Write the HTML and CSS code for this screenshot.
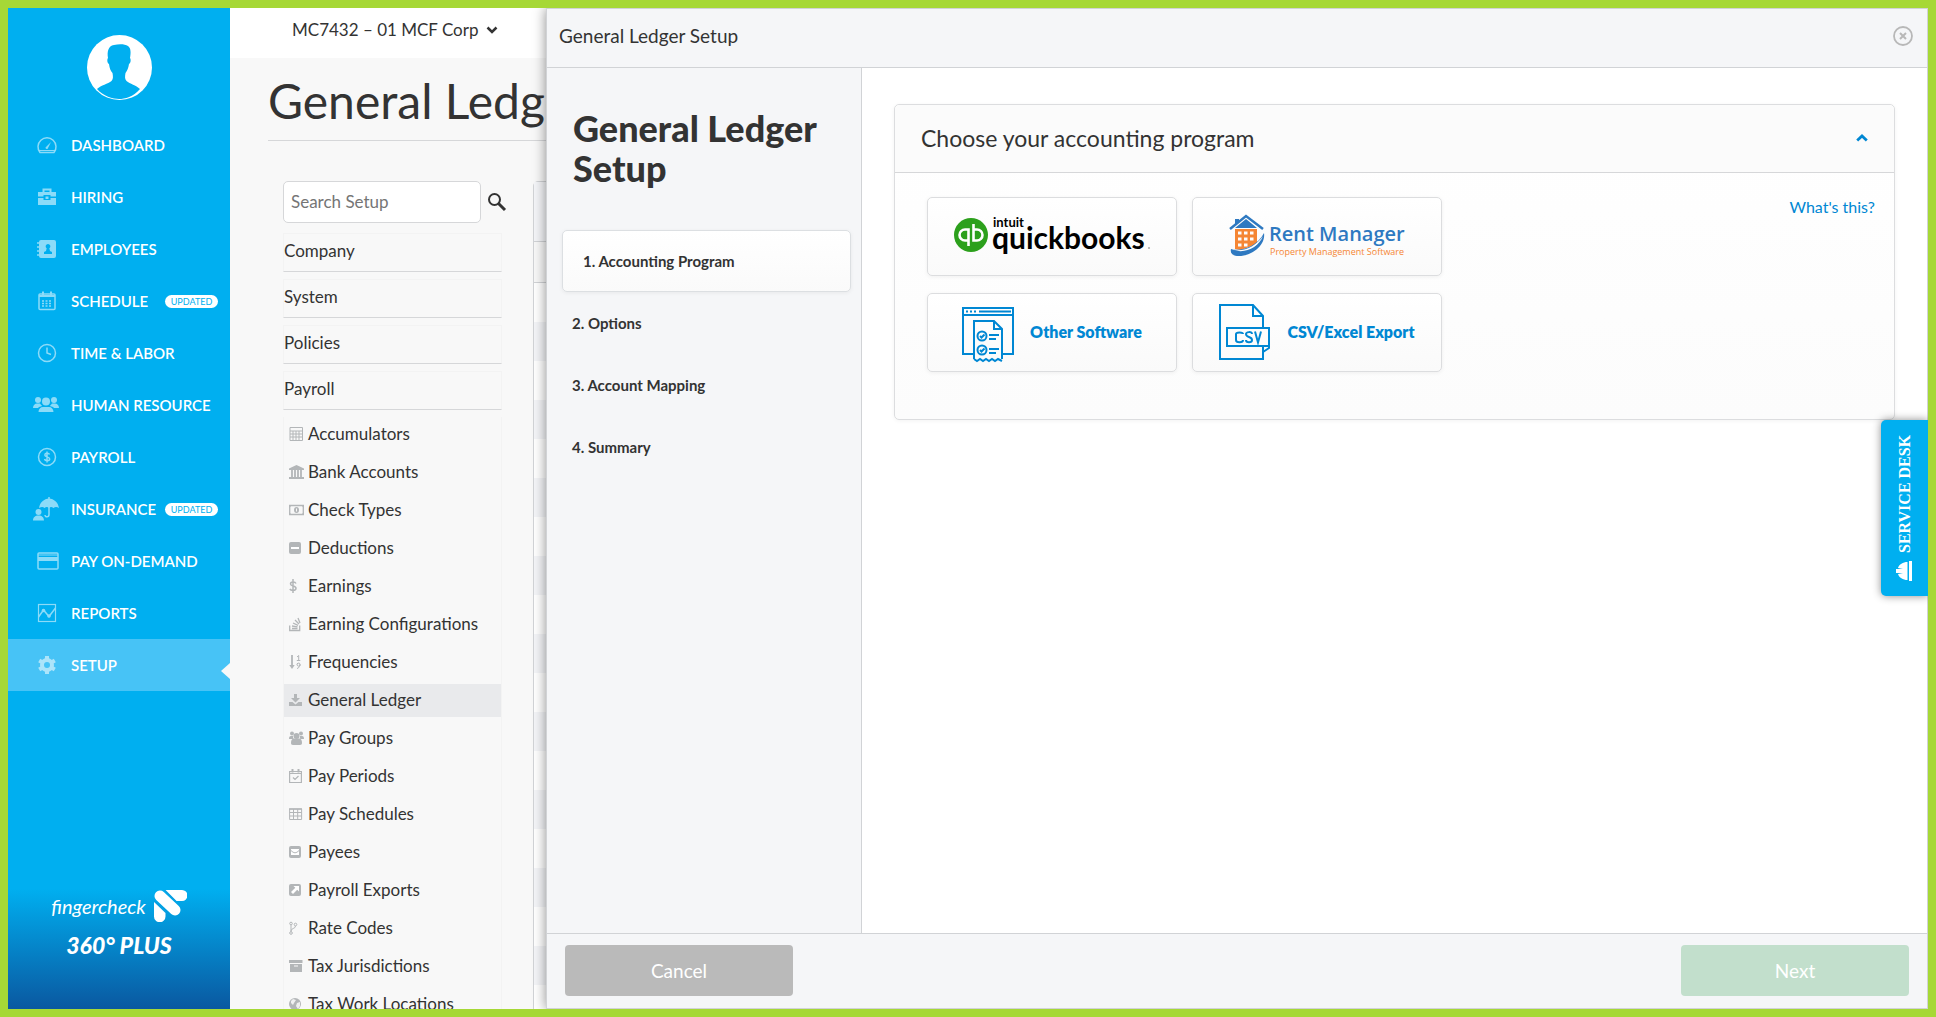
FILE: index.html
```html
<!DOCTYPE html>
<html lang="en">
<head>
  <meta charset="UTF-8">
  <meta name="viewport" content="width=device-width, initial-scale=1.0">
  <title>General Ledger Setup</title>
  <link rel="stylesheet" href="styles.css">
</head>
<body>
  <div class="app">
    <aside class="sidebar">
      <svg class="avatar" viewBox="0 0 65 65">
        <circle cx="32.5" cy="32.5" r="32.5" fill="#fff"/>
        <path d="M10 54c4-4 11-5 14.500-8 2-2 1.500-5 1-8-2-2-3-5-3.500-9-2-1-2-5-1-6-1-6 0-12 6-13 5-1 11-1 14 1 3 2 3 7 2 12 1 1 1 5-1 6-.5 4-2 7-3.500 9-.5 3-1 6 1 8C43 49 49 50 53 54 46 62 38 64 32 64S16 61 10 54z" fill="#00aff0"/>
      </svg>
      <nav class="menu">
        <a class="menu-item" href="#">
          <svg class="menu-icon" viewBox="0 0 20 20"><path d="M3 17.500a9 9 0 1 1 14 0z" fill="none" stroke="#fff" stroke-width="1.500"/><path d="M8.500 12.500L14 7l-3.500 7a1.500 1.500 0 0 1-2-1.500z" fill="#fff"/><path d="M2 15.500h16" stroke="#fff"/></svg>
          DASHBOARD
        </a>
        <a class="menu-item" href="#">
          <svg class="menu-icon" viewBox="0 0 20 20"><path d="M6.500 5V2.500h7V5" fill="none" stroke="#fff" stroke-width="2"/><path d="M1 5h18v4.500h-5.500V8h-7v1.500H1zM1 11h5.500v2h7v-2H19v7H1z" fill="#fff"/><path d="M8.500 9.500h3v2.500h-3z" fill="#fff"/></svg>
          HIRING
        </a>
        <a class="menu-item" href="#">
          <svg class="menu-icon" viewBox="0 0 20 20"><path fill-rule="evenodd" d="M4 1h13a2 2 0 0 1 2 2v14a2 2 0 0 1-2 2H4a2 2 0 0 1-2-2V3a2 2 0 0 1 2-2zm7 4a2.300 2.300 0 0 0-1.300 4.200L9 12l-2 1v2h8v-2l-2-1-.7-2.800A2.300 2.300 0 0 0 11 5z" fill="#fff"/><path d="M0 4h2M0 8h2M0 12h2M0 16h2" stroke="#fff" stroke-width="1.500"/></svg>
          EMPLOYEES
        </a>
        <a class="menu-item" href="#">
          <svg class="menu-icon" viewBox="0 0 20 20"><rect x="2" y="3" width="16" height="15.500" rx="1" fill="none" stroke="#fff" stroke-width="1.500"/><path d="M2 5h16M6 .5v4M14 .5v4" stroke="#fff" stroke-width="2"/><path d="M5 10h10M5 12.500h10M5 15h10" stroke="#fff" stroke-width="1.500" stroke-dasharray="2 1.500"/></svg>
          SCHEDULE <span class="badge">UPDATED</span>
        </a>
        <a class="menu-item" href="#">
          <svg class="menu-icon" viewBox="0 0 20 20"><circle cx="10" cy="10" r="8.500" fill="none" stroke="#fff" stroke-width="1.500"/><path d="M10 4.500V10l4 1.500" fill="none" stroke="#fff" stroke-width="1.500"/></svg>
          TIME &amp; LABOR
        </a>
        <a class="menu-item" href="#">
          <svg class="menu-icon wide" viewBox="0 0 26 20"><g fill="#fff"><circle cx="5" cy="5" r="3"/><circle cx="21" cy="5" r="3"/><circle cx="13" cy="6.500" r="4"/><path d="M0 13c0-3 2-4.500 4-4.500h3c1 1.500 2 2 2 2.500-2 .5-3 1-4 2zM26 13c0-3-2-4.500-4-4.500h-3c-1 1.500-2 2-2 2.500 2 .5 3 1 4 2zM5.500 17c0-3 2-5 4.500-5h6c2.500 0 4.500 2 4.500 5z"/></g></svg>
          HUMAN RESOURCE
        </a>
        <a class="menu-item" href="#">
          <svg class="menu-icon" viewBox="0 0 20 20"><circle cx="10" cy="10" r="8.500" fill="none" stroke="#fff" stroke-width="1.500"/><path d="M12.500 7.500C12 6 8 5.700 7.800 8c0 2.300 4.900 1.500 4.900 4 0 2.300-4.700 2.300-5.200 0M10 4.500v11" fill="none" stroke="#fff" stroke-width="1.500"/></svg>
          PAYROLL
        </a>
        <a class="menu-item" href="#">
          <svg class="menu-icon wide tall" viewBox="0 0 26 24"><g fill="#fff"><circle cx="5.500" cy="15" r="3"/><path d="M0 23.500c0-3 2-5 5.500-5s5.500 2 5.500 5zM6 11C7 5 11 2 16 1.500c5 .5 9 3.500 10 9.500-2-1.500-4-1.500-5.500 0-2-1.500-3-1.500-4.500 0-1.500-1.500-3-1.500-4.500 0-1.500-1.500-3-1.500-5.500 0z"/></g><path d="M16 0v17.500c0 3-4 3-4 .5" fill="none" stroke="#fff" stroke-width="1.500"/></svg>
          INSURANCE <span class="badge">UPDATED</span>
        </a>
        <a class="menu-item" href="#">
          <svg class="menu-icon card-icon" viewBox="0 0 22 20"><rect x="1" y="2" width="20" height="16" rx="1" fill="none" stroke="#fff" stroke-width="1.500"/><path d="M1 4h20" stroke="#fff"/><path d="M1 8h20" stroke="#fff" stroke-width="4"/></svg>
          PAY ON-DEMAND
        </a>
        <a class="menu-item" href="#">
          <svg class="menu-icon" viewBox="0 0 20 20"><rect x="1.500" y="1.500" width="17" height="17" fill="none" stroke="#fff" stroke-width="1.200"/><path d="M1.500 14l5-7 5.500 6.500L18.500 5" fill="none" stroke="#fff" stroke-width="1.500"/><circle cx="6.500" cy="7.500" r="1.800" fill="#fff"/><circle cx="12" cy="13" r="1.800" fill="#fff"/></svg>
          REPORTS
        </a>
        <a class="menu-item active" href="#">
          <svg class="menu-icon" viewBox="0 0 20 20"><circle cx="10" cy="10" r="5" fill="none" stroke="#fff" stroke-width="4"/><path d="M10 1v4M10 15v4M2.200 5.500l3.500 2M14.300 12.500l3.500 2M2.200 14.500l3.500-2M14.300 7.500l3.500-2" stroke="#fff" stroke-width="4"/></svg>
          SETUP
        </a>
      </nav>
      <div class="brand">
        <div class="brand-row">
          <span class="brand-name">fingercheck</span>
          <svg class="brand-mark" viewBox="0 0 33 32"><g stroke="#fff" stroke-width="11" stroke-linecap="round"><path d="M6 6l15 14"/></g><path d="M10.500 0H28a5.500 5.500 0 0 1 0 11H22zM0 11l11.500 11v4.500a5.700 5.700 0 0 1-11.500 0z" fill="#fff"/><path d="M9.500 -1L22 11.500M-1 10l13 12.500" stroke="#0a9fe2" stroke-width="1.500"/></svg>
        </div>
        <div class="brand-plan">360° PLUS</div>
      </div>
    </aside>

    <main class="page">
      <div class="topbar">
        <button class="company" type="button">MC7432 – 01 MCF Corp
          <svg class="chevron" viewBox="0 0 12 8"><path d="M1.500 1.500L6 6l4.500-4.500" fill="none" stroke="currentColor" stroke-width="2.500"/></svg>
        </button>
      </div>
      <h1 class="page-title">General Ledger</h1>

      <div class="columns">
        <div class="setup-nav">
          <form class="search">
            <input type="text" placeholder="Search Setup" aria-label="Search Setup">
            <button type="button" aria-label="Search">
              <svg viewBox="0 0 20 20"><circle cx="7.500" cy="7.500" r="5.500" fill="none" stroke="#333" stroke-width="2"/><path d="M11.500 11.500L18 18" stroke="#333" stroke-width="3"/></svg>
            </button>
          </form>
          <a class="group" href="#">Company</a>
          <a class="group" href="#">System</a>
          <a class="group" href="#">Policies</a>
          <a class="group" href="#">Payroll</a>
          <ul class="items">
            <li><a href="#"><svg viewBox="0 0 16 16"><path d="M1 1.500h12.500v13H1zM1 5h12.500M1 8h12.500M1 11h12.500M4 5v9.500M7 5v9.500M10 5v9.500" fill="none" stroke="#b3b6b8"/></svg>Accumulators</a></li>
            <li><a href="#"><svg viewBox="0 0 16 16"><path d="M0 4.500L7.500 1 15 4.500V6H0zM0 13h15v2H0z" fill="#b3b6b8"/><path d="M3 6v7M6 6v7M9 6v7M12 6v7" stroke="#b3b6b8" stroke-width="1.800"/></svg>Bank Accounts</a></li>
            <li><a href="#"><svg viewBox="0 0 16 16"><path d="M.7 3.500h13.600v9H.7z" fill="none" stroke="#b3b6b8" stroke-width="1.300"/><path d="M0 3h3L0 6zM15 3v3l-3-3zM0 10l3 3H0zM15 10v3h-3z" fill="#b3b6b8"/><ellipse cx="7.500" cy="8" rx="2.500" ry="3" fill="#b3b6b8"/><path d="M7.500 6.500v3" stroke="#f8f8f8"/></svg>Check Types</a></li>
            <li><a href="#"><svg viewBox="0 0 16 16"><rect y="2" width="12" height="12" rx="2" fill="#b3b6b8"/><path d="M2 8h8" stroke="#fff" stroke-width="2"/></svg>Deductions</a></li>
            <li><a href="#"><svg viewBox="0 0 16 16"><path d="M7 5.500C6 3.500 1.500 3.500 1.500 6S7 7.500 7 10.200 2 13 .8 11M4 1v14" fill="none" stroke="#b3b6b8" stroke-width="1.500"/></svg>Earnings</a></li>
            <li><a href="#"><svg viewBox="0 0 16 16"><path d="M.7 9.500v5h10v-5M3 12.500h5.500M3 10l5.500.8M4 7l5 2.300M6 4l4 4M9 2l2 5" fill="none" stroke="#b3b6b8" stroke-width="1.300"/></svg>Earning Configurations</a></li>
            <li><a href="#"><svg viewBox="0 0 16 16"><path d="M3 1v12" stroke="#b3b6b8" stroke-width="1.800"/><path d="M.3 11h5.400L3 15z" fill="#b3b6b8"/><path d="M8 3l1.700-1.500V6.500M7.800 6.500h3.500M11 10.500a1.500 1.500 0 1 0-.5 1.200c.5-3 .7 2.500-2.500 2.800M11 10v2" fill="none" stroke="#b3b6b8"/></svg>Frequencies</a></li>
            <li class="current"><a href="#"><svg viewBox="0 0 16 16"><path d="M0 10h3.500L6.500 12.500 9.500 10H13v4H0z" fill="#b3b6b8"/><path d="M5 2h3v4h3L6.500 10.500 2 6h3z" fill="#b3b6b8"/></svg>General Ledger</a></li>
            <li><a href="#"><svg viewBox="0 0 16 16"><g fill="#b3b6b8"><circle cx="3" cy="3.500" r="2"/><circle cx="12" cy="3.500" r="2"/><circle cx="7.500" cy="6" r="3"/><path d="M0 9c0-2 .5-3 2-3h2c0 2 0 2.500 1 3zM15 9c0-2-.5-3-2-3h-2c0 2 0 2.500-1 3zM2 13c0-3 1-4.500 3-4.500h5c2 0 3 1.500 3 4.500 0 1-.5 2-2 2H4c-1.500 0-2-1-2-2z"/></g></svg>Pay Groups</a></li>
            <li><a href="#"><svg viewBox="0 0 16 16"><path d="M.6 3.500h11.800v11H.6zM.6 5.500h11.800M4 9.500l2 2 3.500-3.500" fill="none" stroke="#b3b6b8" stroke-width="1.200"/><path d="M3.500 1v3.500M9.500 1v3.500" stroke="#b3b6b8" stroke-width="2"/></svg>Pay Periods</a></li>
            <li><a href="#"><svg viewBox="0 0 16 16"><path d="M.6 3h12v10.500H.6zM.6 6.500h12M.6 10h12M4.500 3v10.500M8.700 3v10.500" fill="none" stroke="#b3b6b8"/><path d="M0 3h13" stroke="#b3b6b8" stroke-width="1.500"/></svg>Pay Schedules</a></li>
            <li><a href="#"><svg viewBox="0 0 16 16"><rect y="2" width="12" height="12" rx="2" fill="#b3b6b8"/><path d="M2 5h8v6H2z" fill="#fff"/><path d="M2 6.500c3 3 5 3 8 0" fill="none" stroke="#b3b6b8"/></svg>Payees</a></li>
            <li><a href="#"><svg viewBox="0 0 16 16"><rect y="2" width="12" height="12" rx="2" fill="#b3b6b8"/><path d="M4.500 4H10v5.500L8.200 7.700 4 12l-2-2 4.300-4.200z" fill="#fff"/></svg>Payroll Exports</a></li>
            <li><a href="#"><svg viewBox="0 0 16 16"><g fill="none" stroke="#b3b6b8"><circle cx="2" cy="3.500" r="1.300"/><circle cx="6.500" cy="4.500" r="1.300"/><circle cx="2" cy="13" r="1.300"/><path d="M2 5v7M6.500 6c0 3-4.500 2-4.500 5"/></g></svg>Rate Codes</a></li>
            <li><a href="#"><svg viewBox="0 0 16 16"><path fill-rule="evenodd" d="M0 2h13.500v3H0zM1 6h12v8H1zm4 1.500v1h4v-1z" fill="#b3b6b8"/></svg>Tax Jurisdictions</a></li>
            <li><a href="#"><svg viewBox="0 0 16 16"><circle cx="6" cy="8" r="6" fill="#b3b6b8"/><path d="M2 5l2-2 3 1-2 3-1 2-2-2zM8 7l3-1v4l-2 3-2-3z" fill="#f0f0f0"/></svg>Tax Work Locations</a></li>
          </ul>
        </div>
        <div class="grid-panel">
          <div class="grid-head"></div>
          <div class="grid-filter"></div>
          <div class="grid-rows"></div>
        </div>
      </div>
    </main>

    <section class="modal">
      <header class="modal-header">
        <span>General Ledger Setup</span>
        <button class="close" type="button" aria-label="Close">
          <svg viewBox="0 0 20 20"><circle cx="10" cy="10" r="9" fill="none" stroke="#b8b8b8" stroke-width="1.800"/><path d="M7 7l6 6M13 7l-6 6" stroke="#b8b8b8" stroke-width="2"/></svg>
        </button>
      </header>
      <div class="modal-body">
        <div class="steps">
          <h2>General Ledger Setup</h2>
          <a class="step active" href="#">1. Accounting Program</a>
          <a class="step" href="#">2. Options</a>
          <a class="step" href="#">3. Account Mapping</a>
          <a class="step" href="#">4. Summary</a>
        </div>
        <div class="content">
          <div class="card">
            <div class="card-header">
              <h3>Choose your accounting program</h3>
              <svg class="chevron" viewBox="0 0 12 8"><path d="M1.200 6.500L6 2l4.800 4.500" fill="none" stroke="#0087d3" stroke-width="2.800"/></svg>
            </div>
            <div class="card-body">
              <div class="programs">
                <button class="program" type="button">
                  <svg class="logo" viewBox="0 0 198 44">
                    <circle cx="18" cy="21" r="17" fill="#2ca01c"/>
                    <g fill="none" stroke="#fff" stroke-width="2.600"><path d="M15.500 26.500H12a5.500 5.500 0 0 1 0-11h3.500V32M20.500 15.500H24a5.500 5.500 0 0 1 0 11h-3.500V10"/></g>
                    <text class="qb-small" x="40" y="13">intuit</text>
                    <text class="qb-name" x="39" y="35">quickbooks</text>
                    <circle cx="196" cy="34" r="1" fill="#aaa"/>
                  </svg>
                </button>
                <button class="program" type="button">
                  <svg class="logo rm" viewBox="0 0 176 44">
                    <path d="M1 15L17 2l17 13" fill="none" stroke="#2e79c1" stroke-width="2.500"/>
                    <path d="M6 11V5h4v3zM17 5l11 9H6z" fill="#2e79c1"/>
                    <path fill-rule="evenodd" d="M6 15h22v15L12 36l-6-1zm3 2.500v3h3.500v-3zm6 0v3h3.500v-3zm6 0v3h3.500v-3zm-12 6v3h3.500v-3zm6 0v3h3.500v-3zm6 0v3h3.500v-3zm-12 6v3h3.500v-3zm6 0v3h3.500v-3z" fill="#f58634"/>
                    <path d="M2 35c9 3 26-2 33-16 2 13-14 24-27 23-5-.5-7-3-6-7z" fill="#2e79c1"/>
                    <path d="M5 36c11 2 23-5 29-14-4 11-18 18-29 14z" fill="#fff"/>
                    <text class="rm-name" x="40" y="27">Rent Manager</text>
                    <text class="rm-tag" x="41" y="41">Property Management Software</text>
                  </svg>
                </button>
                <button class="program" type="button">
                  <svg class="program-icon" viewBox="0 0 52 56"><g fill="none" stroke="#0087d3" stroke-width="2"><path d="M12 50H1V4h50v46H40M1 11h50"/><path d="M17 7.500h32M4 7.500h2M8 7.500h2M12 7.500h2"/><path d="M12 55V17h20l8 8v30M32 17v8h8M27 31h10M27 35h7M27 45h10M27 49h7M12 55l3 2 3-2 3 2 3-2 3 2 3-2 3 2 3-2 4 2"/><circle cx="20" cy="32" r="4.500"/><circle cx="20" cy="46" r="4.500"/><path d="M18 32l1.500 1.500 3-3M18 46l1.500 1.500 3-3"/></g></svg>
                  <span>Other Software</span>
                </button>
                <button class="program" type="button">
                  <svg class="program-icon" viewBox="0 0 52 56"><g fill="none" stroke="#0087d3" stroke-width="2"><path d="M44 23V12L34 1H1v54h43V43M34 1v11h10M8 24h42v18H8zM50 42v2l-6 4"/></g><g fill="none" stroke="#0087d3" stroke-width="2"><path d="M24 30c0-2-7-2-7 0v6c0 3 7 3 7 0M33 30c0-3-6-2-6 0 0 4 6 2 6 6 0 3-6 3-6 0M36 27.500l3 11 3-11"/></g></svg>
                  <span>CSV/Excel Export</span>
                </button>
              </div>
              <a class="help" href="#">What's this?</a>
            </div>
          </div>
        </div>
      </div>
      <footer class="modal-footer">
        <button class="btn cancel" type="button">Cancel</button>
        <button class="btn next" type="button">Next</button>
      </footer>
    </section>

    <button class="service-desk" type="button">
      <svg viewBox="0 0 20 18"><path d="M0 14h20v3H0zM1 12.500C1 8 3.500 4 7 3l1 5V1h4v7l1-5c3.500 1 6 5 6 9.500z" fill="#fff"/></svg>
      SERVICE DESK
    </button>
  </div>
</body>
</html>
```
FILE: styles.css
```css
* {
  box-sizing: border-box;
}
body {
  margin: 0;
  font-family: Lato, "Liberation Sans", sans-serif;
  font-size: 16px;
  color: #333;
}
a {
  color: inherit;
  text-decoration: none;
}
button {
  font-family: inherit;
  cursor: pointer;
}
.app {
  position: relative;
  display: flex;
  height: 100vh;
  border: 8px solid #a6d836;
  overflow: hidden;
}

/* sidebar */
.sidebar {
  display: flex;
  flex-direction: column;
  flex: 0 0 222px;
  padding-top: 27px;
  background: linear-gradient(#00aff0 88%, #0a58a0 100%);
}
.avatar {
  width: 65px;
  height: 65px;
  margin: 0 auto 19px;
  flex-shrink: 0;
}
.menu-item {
  position: relative;
  display: flex;
  align-items: center;
  height: 52px;
  padding-left: 29px;
  color: #fff;
  font-size: 15px;
  font-weight: 600;
  white-space: nowrap;
}
.menu-item.active {
  background: #47c3f6;
}
.menu-item.active::after {
  content: "";
  position: absolute;
  right: 0;
  top: 24px;
  border: 8px solid transparent;
  border-right: 9px solid #f8f8f8;
  border-left: 0;
}
.menu-icon {
  width: 20px;
  height: 20px;
  margin-right: 14px;
  opacity: 0.55;
}
.menu-icon.wide {
  width: 26px;
  margin-left: -4px;
  margin-right: 12px;
}
.menu-icon.tall {
  height: 24px;
}
.menu-icon.card-icon {
  width: 22px;
  margin-right: 12px;
}
.badge {
  width: 53px;
  margin-left: auto;
  margin-right: 12px;
  border-radius: 7px;
  background: #fff;
  color: #00aff0;
  font-size: 9px;
  font-weight: 400;
  line-height: 13px;
  text-align: center;
}
.brand {
  margin-top: auto;
  padding-bottom: 51px;
  color: #fff;
  text-align: center;
  font-style: italic;
}
.brand-row {
  display: flex;
  align-items: center;
  justify-content: center;
  gap: 8px;
}
.brand-name {
  font-size: 20px;
}
.brand-mark {
  width: 33px;
  height: 32px;
}
.brand-plan {
  margin-top: 10px;
  font-size: 23px;
  line-height: 26px;
  font-weight: 900;
}

/* page behind the panel */
.page {
  flex: 1;
  min-width: 0;
  background: #f8f8f8;
}
.topbar {
  height: 50px;
  padding: 10px 0 0 62px;
  background: #fff;
}
.company {
  display: flex;
  align-items: center;
  gap: 8px;
  padding: 0;
  border: 0;
  background: none;
  color: #333;
  font-size: 17px;
  line-height: 24px;
}
.chevron {
  width: 12px;
  height: 8px;
}
.page-title {
  margin: 0 38px;
  padding: 16px 0 12px;
  border-bottom: 1px solid #d6d7d9;
  font-size: 48px;
  line-height: 54px;
  font-weight: 400;
  white-space: nowrap;
}
.columns {
  display: flex;
  gap: 31px;
  padding: 40px 38px 0 53px;
}
.setup-nav {
  flex: 0 0 219px;
  min-width: 0;
  font-size: 17px;
  white-space: nowrap;
}
.search {
  display: flex;
  align-items: center;
  width: 226px;
  gap: 6px;
  margin-bottom: 10px;
}
.search input {
  width: 198px;
  height: 42px;
  padding: 0 7px 2px;
  border: 1px solid #d6d7d9;
  border-radius: 5px;
  font-family: inherit;
  font-size: 17px;
}
.search input::placeholder {
  color: #757575;
}
.search button {
  display: flex;
  padding: 0;
  border: 0;
  background: none;
}
.search svg {
  width: 20px;
  height: 20px;
}
.group {
  display: block;
  height: 39px;
  margin-bottom: 7px;
  border: 1px solid #f3f3f3;
  border-bottom-color: #d6d7d9;
  line-height: 34px;
}
.items {
  margin: 0;
  padding: 1px 0 0;
  border: solid #f3f3f3;
  border-width: 0 1px;
  list-style: none;
}
.items li {
  margin-bottom: 5px;
}
.items a {
  display: flex;
  align-items: center;
  gap: 3px;
  height: 33px;
  padding: 0 0 2px 5px;
}
.items svg {
  width: 16px;
  height: 16px;
}
.items .current {
  background: #e9eaec;
}
.grid-panel {
  flex: 1;
  border: 1px solid #d1d3d6;
  border-radius: 5px 0 0 0;
}
.grid-head {
  height: 60px;
  background: #f4f5f8;
  border-bottom: 1px solid #d1d3d6;
}
.grid-filter {
  height: 41px;
  border-bottom: 1px solid #d1d3d6;
}
.grid-rows {
  height: 780px;
  background: repeating-linear-gradient(#fff 0 39px, #f4f5f8 39px 78px);
}

/* slide-in setup panel */
.modal {
  position: absolute;
  top: 0;
  right: 0;
  bottom: 0;
  left: 538px;
  display: flex;
  flex-direction: column;
  border: 1px solid #d1d3d6;
  background: #f5f6f8;
  box-shadow: 0 0 12px rgba(0, 0, 0, 0.45);
}
.modal-header {
  display: flex;
  align-items: center;
  justify-content: space-between;
  height: 59px;
  padding: 0 14px 5px 12px;
  border-bottom: 1px solid #d1d3d6;
  font-size: 19px;
}
.close {
  display: flex;
  padding: 0;
  border: 0;
  background: none;
}
.close svg {
  width: 20px;
  height: 20px;
}
.modal-body {
  display: flex;
  flex: 1;
  min-height: 0;
}
.steps {
  flex: 0 0 315px;
  padding: 40px 10px 0 15px;
  border-right: 1px solid #d1d3d6;
}
.steps h2 {
  margin: 0 0 42px;
  padding-left: 11px;
  font-size: 36px;
  line-height: 40px;
  font-weight: 900;
}
.step {
  display: block;
  padding-left: 10px;
  font-weight: 700;
  font-size: 15px;
  line-height: 62px;
}
.step.active {
  padding-left: 20px;
  border: 1px solid #dcdfe2;
  border-radius: 5px;
  background: linear-gradient(#fff, #fafafa);
  box-shadow: 0 1px 4px rgba(0, 0, 0, 0.06);
  line-height: 60px;
}
.content {
  flex: 1;
  padding: 36px 32px;
  background: #fff;
}
.card {
  border: 1px solid #dcdddf;
  border-radius: 5px;
  background: linear-gradient(#fff, #fcfcfc);
  box-shadow: 0 1px 4px rgba(0, 0, 0, 0.05);
}
.card-header {
  display: flex;
  align-items: center;
  justify-content: space-between;
  height: 68px;
  padding: 0 26px 2px;
  border-bottom: 1px solid #d6d7d9;
  border-radius: 5px 5px 0 0;
  background: #fbfbfb;
}
.card-header h3 {
  margin: 0;
  font-size: 23px;
  font-weight: 400;
}
.card-body {
  display: flex;
  justify-content: space-between;
  padding: 24px 19px 47px 32px;
}
.programs {
  display: grid;
  grid-template-columns: 250px 250px;
  gap: 17px 15px;
}
.program {
  display: flex;
  align-items: center;
  justify-content: center;
  gap: 16px;
  height: 79px;
  padding: 0 0 2px;
  border: 1px solid #dcdddf;
  border-radius: 5px;
  background: linear-gradient(#fff, #fafafa);
  box-shadow: 0 1px 4px rgba(0, 0, 0, 0.06);
  color: #0087d3;
  font-size: 16px;
  font-weight: 800;
}
.program-icon {
  width: 52px;
  height: 56px;
  overflow: visible;
}
.logo {
  width: 198px;
  height: 44px;
  overflow: visible;
}
.logo.rm {
  width: 176px;
}
.qb-small {
  font-size: 13px;
  font-weight: 700;
}
.qb-name {
  font-size: 30px;
  font-weight: 700;
}
.rm-name {
  font-family: "Open Sans", sans-serif;
  font-size: 20px;
  font-weight: 600;
  fill: #2e79c1;
}
.rm-tag {
  font-family: "Open Sans", sans-serif;
  font-size: 9px;
  font-weight: 400;
  fill: #f58634;
}
.help {
  color: #0087d3;
  line-height: 20px;
}
.modal-footer {
  display: flex;
  justify-content: space-between;
  height: 75px;
  padding: 11px 18px 0;
  border-top: 1px solid #d1d3d6;
}
.btn {
  width: 228px;
  height: 51px;
  border: 0;
  border-radius: 4px;
  color: #fff;
  font-size: 19px;
}
.btn.cancel {
  background: #bababa;
}
.btn.next {
  background: #c2dfcc;
}

.service-desk {
  position: absolute;
  right: 0;
  top: 412px;
  display: flex;
  align-items: center;
  gap: 8px;
  width: 47px;
  height: 176px;
  padding: 15px 0;
  border: 0;
  border-radius: 0 5px 5px 0;
  background: #00aff0;
  box-shadow: 0 0 8px rgba(0, 0, 0, 0.45);
  color: #fff;
  font-family: "Liberation Serif", serif;
  font-size: 16px;
  font-weight: 700;
  white-space: nowrap;
  writing-mode: vertical-rl;
  transform: rotate(180deg);
}
.service-desk svg {
  flex-shrink: 0;
  width: 20px;
  height: 20px;
  transform: rotate(90deg);
}
```
